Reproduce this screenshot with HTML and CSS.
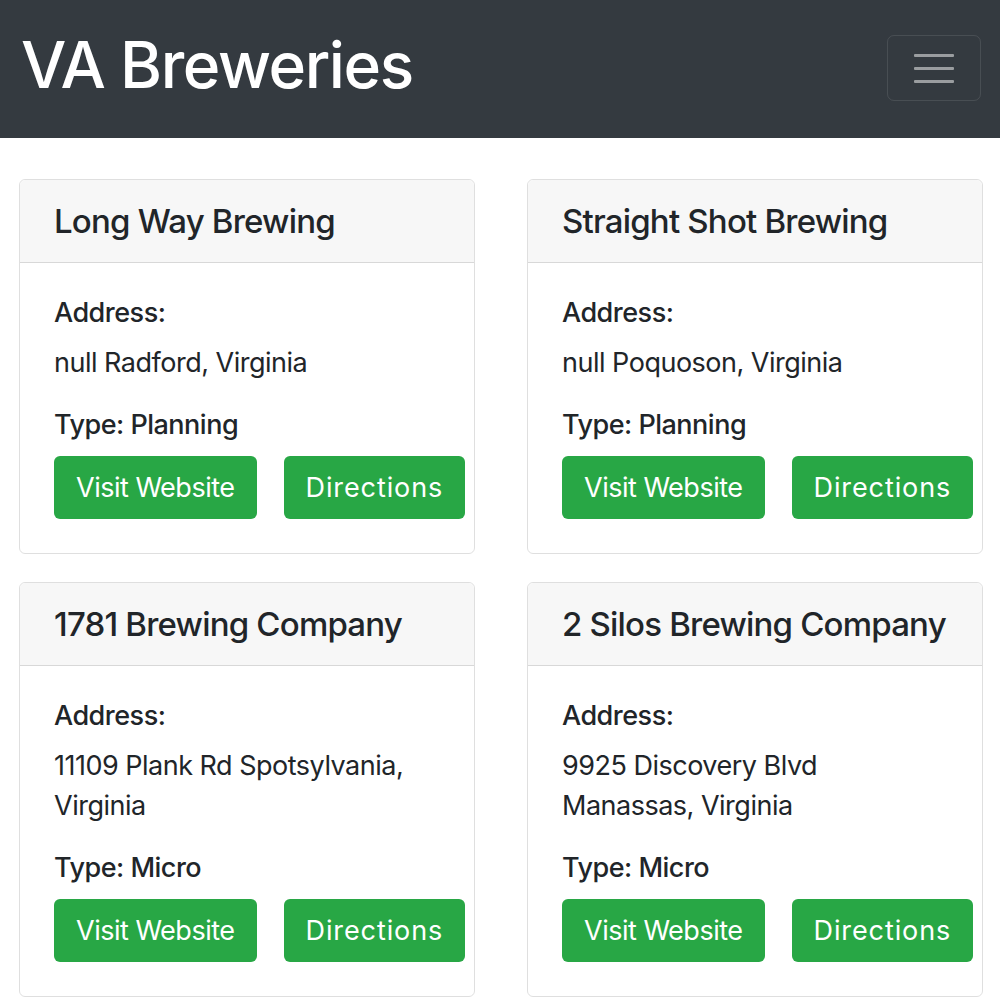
FILE: index.html
```html
<!DOCTYPE html>
<html lang="en">
<head>
<meta charset="utf-8">
<title>VA Breweries</title>
<link rel="stylesheet" href="styles.css">
</head>
<body>
<nav class="navbar">
  <span class="brand">VA Breweries</span>
  <button class="toggler" aria-label="Toggle navigation">
    <span class="bar"></span><span class="bar"></span><span class="bar"></span>
  </button>
</nav>
<main class="grid">
  <section class="card">
    <h4 class="card-header">Long Way Brewing</h4>
    <div class="card-body">
      <p class="label">Address:</p>
      <p class="addr">null Radford, Virginia</p>
      <p class="type">Type: Planning</p>
      <div class="actions"><a class="btn">Visit Website</a><a class="btn btn-dir">Directions</a></div>
    </div>
  </section>
  <section class="card">
    <h4 class="card-header">Straight Shot Brewing</h4>
    <div class="card-body">
      <p class="label">Address:</p>
      <p class="addr">null Poquoson, Virginia</p>
      <p class="type">Type: Planning</p>
      <div class="actions"><a class="btn">Visit Website</a><a class="btn btn-dir">Directions</a></div>
    </div>
  </section>
  <section class="card">
    <h4 class="card-header">1781 Brewing Company</h4>
    <div class="card-body">
      <p class="label">Address:</p>
      <p class="addr">11109 Plank Rd Spotsylvania, Virginia</p>
      <p class="type">Type: Micro</p>
      <div class="actions"><a class="btn">Visit Website</a><a class="btn btn-dir">Directions</a></div>
    </div>
  </section>
  <section class="card">
    <h4 class="card-header">2 Silos Brewing Company</h4>
    <div class="card-body">
      <p class="label">Address:</p>
      <p class="addr">9925 Discovery Blvd Manassas, Virginia</p>
      <p class="type">Type: Micro</p>
      <div class="actions"><a class="btn">Visit Website</a><a class="btn btn-dir">Directions</a></div>
    </div>
  </section>
</main>
</body>
</html>
```
FILE: styles.css
```css
* { box-sizing: border-box; }
html, body { margin: 0; padding: 0; }
body {
  font-family: Inter, "Noto Sans", "Liberation Sans", sans-serif;
  color: #212529;
  background: #fff;
  font-size: 27px;
  line-height: 40px;
  letter-spacing: -0.5px;
}
.navbar {
  height: 138px;
  background: #343a40;
  display: flex;
  align-items: center;
  justify-content: space-between;
  padding: 0 19px 0 21px;
}
.brand {
  color: #fff;
  font-size: 64px;
  font-weight: 500;
  letter-spacing: -1.4px;
  line-height: 1;
  margin-top: -9px;
}
.toggler {
  width: 94px;
  height: 66px;
  border: 1px solid rgba(255,255,255,0.1);
  border-radius: 7px;
  background: transparent;
  display: flex;
  flex-direction: column;
  align-items: center;
  justify-content: center;
  gap: 10px;
  padding: 0;
  margin-top: -2px;
}
.toggler .bar {
  display: block;
  width: 40px;
  height: 3px;
  background: rgba(255,255,255,0.5);
  border-radius: 1px;
}
.grid {
  display: grid;
  grid-template-columns: 456px 456px;
  column-gap: 52px;
  row-gap: 28px;
  padding: 41px 17px 0 19px;
  align-items: start;
}
.card {
  border: 1px solid rgba(0,0,0,0.125);
  border-radius: 6px;
}
.card-header {
  margin: 0;
  background: #f7f7f7;
  border-bottom: 1px solid rgba(0,0,0,0.125);
  border-radius: 6px 6px 0 0;
  padding: 20px 20px 20px 34px;
  font-size: 33px;
  font-weight: 500;
  line-height: 42px;
  letter-spacing: -0.8px;
  white-space: nowrap;
}
.card-body {
  padding: 30px 34px 34px 34px;
}
.card-body p { margin: 0; }
.label { font-weight: 500; margin-bottom: 10px !important; }
.addr { margin-bottom: 22px !important; }
.type { font-weight: 500; margin-bottom: 11px !important; }
.actions {
  display: flex;
  gap: 27px;
}
.btn {
  flex-shrink: 0;
  display: inline-block;
  background: #28a745;
  color: #fff;
  border-radius: 6px;
  height: 63px;
  padding: 0 22px;
  line-height: 63px;
  font-size: 27px;
  white-space: nowrap;
}
.btn-dir { letter-spacing: 0.9px; }
```
